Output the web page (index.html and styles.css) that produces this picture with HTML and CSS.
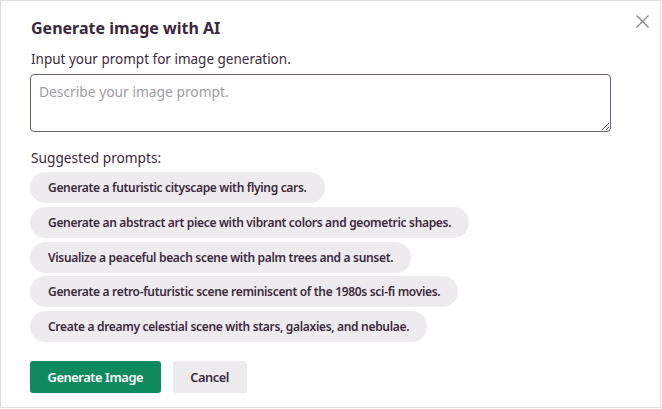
FILE: index.html
```html
<!DOCTYPE html>
<html lang="en">
  <head>
    <meta charset="UTF-8" />
    <meta name="viewport" content="width=device-width, initial-scale=1.0" />
    <title>Generate image with AI</title>
    <link rel="stylesheet" href="styles.css">
  </head>
  <body>
    <div class="modal">
      <button class="close" aria-label="Close">
        <svg width="13" height="13" viewBox="0 0 13 13">
          <path d="M0.5 0.5L12.5 12.5M12.5 0.5L0.5 12.5" stroke="#8c8490" stroke-width="1.3" fill="none" />
        </svg>
      </button>

      <h1>Generate image with AI</h1>

      <label for="prompt">Input your prompt for image generation.</label>
      <textarea id="prompt" placeholder="Describe your image prompt." autofocus></textarea>

      <h2>Suggested prompts:</h2>
      <div class="suggestions">
        <button class="pill">Generate a futuristic cityscape with flying cars.</button>
        <button class="pill">Generate an abstract art piece with vibrant colors and geometric shapes.</button>
        <button class="pill">Visualize a peaceful beach scene with palm trees and a sunset.</button>
        <button class="pill">Generate a retro-futuristic scene reminiscent of the 1980s sci-fi movies.</button>
        <button class="pill">Create a dreamy celestial scene with stars, galaxies, and nebulae.</button>
      </div>

      <div class="actions">
        <button class="btn btn-primary">Generate Image</button>
        <button class="btn btn-secondary">Cancel</button>
      </div>
    </div>
  </body>
</html>
```

FILE: styles.css
```css
body {
  margin: 0;
  font-family: "Noto Sans", "Open Sans", Arial, sans-serif;
  color: #3b2a3d;
  background: #fff;
}
.modal {
  position: relative;
  box-sizing: border-box;
  width: 661px;
  height: 408px;
  border: 1px solid #dedede;
  padding: 16px 30px 0 29px;
}
.close {
  position: absolute;
  top: 14px;
  right: 11px;
  padding: 0;
  border: none;
  background: none;
  line-height: 0;
  cursor: pointer;
}
h1 {
  margin: 0 0 11px 1px;
  font-size: 16px;
  line-height: 22px;
  font-weight: 700;
  color: #3a283d;
}
label {
  display: block;
  margin: 0 0 6px 1px;
  font-size: 13.5px;
  line-height: 18px;
}
textarea {
  display: block;
  box-sizing: border-box;
  width: 581px;
  height: 58px;
  padding: 8px 8px;
  border: 1px solid #6f6073;
  border-radius: 4px;
  font-family: inherit;
  font-size: 13.8px;
  line-height: 18px;
  color: #3b2a3d;
  resize: vertical;
}
textarea:focus {
  outline: none;
}
textarea::placeholder {
  color: #a09ca2;
}
h2 {
  margin: 16px 0 4px 1px;
  font-size: 13.7px;
  line-height: 20px;
  font-weight: 400;
}
.suggestions {
  display: flex;
  flex-direction: column;
  align-items: flex-start;
  gap: 3.75px;
}
.pill {
  height: 31px;
  padding: 0 18px;
  border: none;
  border-radius: 16px;
  background: #edebee;
  font-family: inherit;
  font-size: 12px;
  font-weight: 600;
  letter-spacing: -0.32px;
  color: #3b2a3d;
  cursor: pointer;
}
.actions {
  display: flex;
  gap: 12px;
  margin-top: 19px;
}
.btn {
  height: 32px;
  padding: 0 17.5px;
  border: none;
  border-radius: 3px;
  font-family: inherit;
  font-size: 12.8px;
  font-weight: 600;
  letter-spacing: -0.4px;
  cursor: pointer;
}
.btn-primary {
  background: #0f8a5f;
  color: #fff;
}
.btn-secondary {
  background: #edebee;
  color: #3b2a3d;
}
```
